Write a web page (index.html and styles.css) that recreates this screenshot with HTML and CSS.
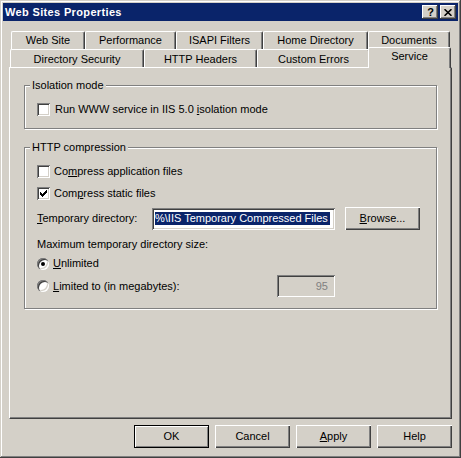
FILE: index.html
```html
<!DOCTYPE html>
<html>
<head>
<meta charset="utf-8">
<title>Web Sites Properties</title>
<link rel="stylesheet" href="styles.css">
</head>
<body>
<div class="window">
  <div class="titlebar">
    <span class="title">Web Sites Properties</span>
    <div class="tbtns">
      <span class="tbtn help">?</span>
      <span class="tbtn close"><svg width="8" height="7" viewBox="0 0 8 7"><path d="M0.5 0.2 L7.5 6.8 M7.5 0.2 L0.5 6.8" stroke="#000" stroke-width="1.6" fill="none"/></svg></span>
    </div>
  </div>
  <div class="content">
    <div class="tabs">
      <div class="tabrow row1">
        <div class="tab w-web">Web Site</div>
        <div class="tab w-perf">Performance</div>
        <div class="tab w-isapi">ISAPI Filters</div>
        <div class="tab w-home">Home Directory</div>
        <div class="tab w-docs">Documents</div>
      </div>
      <div class="tabrow row2">
        <div class="tab w-dirsec">Directory Security</div>
        <div class="tab w-http">HTTP Headers</div>
        <div class="tab w-custom">Custom Errors</div>
        <div class="tab w-service selected">Service</div>
      </div>
    </div>
    <div class="page">
      <fieldset class="group g1">
        <legend>Isolation mode</legend>
        <div class="row cbrow first">
          <span class="cb"></span>
          <span class="lbl">Run WWW service in IIS 5.0 <u>i</u>solation mode</span>
        </div>
      </fieldset>
      <fieldset class="group g2">
        <legend>HTTP compression</legend>
        <div class="row cbrow first">
          <span class="cb"></span>
          <span class="lbl">Co<u>m</u>press application files</span>
        </div>
        <div class="row cbrow second">
          <span class="cb"><svg width="7" height="7" viewBox="0 0 7 7"><g fill="#000"><rect x="0" y="2" width="1" height="3"/><rect x="1" y="3" width="1" height="3"/><rect x="2" y="4" width="1" height="3"/><rect x="3" y="3" width="1" height="3"/><rect x="4" y="2" width="1" height="3"/><rect x="5" y="1" width="1" height="3"/><rect x="6" y="0" width="1" height="3"/></g></svg></span>
          <span class="lbl">Com<u>p</u>ress static files</span>
        </div>
        <div class="row temprow">
          <span class="templbl"><u>T</u>emporary directory:</span>
          <div class="edit tempedit"><span class="sel">%\IIS Temporary Compressed Files</span></div>
          <div class="btn browse"><span><u>B</u>rowse...</span></div>
        </div>
        <div class="row maxrow">Maximum temporary directory size:</div>
        <div class="row radrow unl">
          <span class="radio"><span class="dot"></span></span>
          <span class="rlbl"><u>U</u>nlimited</span>
        </div>
        <div class="row radrow lim">
          <span class="radio"></span>
          <span class="rlbl limlbl"><u>L</u>imited to (in megabytes):</span>
          <div class="edit numedit">95</div>
        </div>
      </fieldset>
    </div>
    <div class="buttons">
      <div class="btn default">OK</div>
      <div class="btn">Cancel</div>
      <div class="btn"><span><u>A</u>pply</span></div>
      <div class="btn">Help</div>
    </div>
  </div>
</div>
</body>
</html>
```
FILE: styles.css
```css
* { box-sizing: border-box; }
html, body { margin: 0; padding: 0; }
body {
  width: 461px;
  height: 458px;
  overflow: hidden;
  background: #D4D0C8;
  font: 11px/13px "Liberation Sans", Arial, sans-serif;
  color: #000;
}
u { text-decoration: underline; text-underline-offset: 1px; }

.window {
  width: 461px;
  height: 458px;
  padding: 3px;
  background: #D4D0C8;
  box-shadow: inset -1px -1px #404040, inset 1px 1px #D4D0C8, inset -2px -2px #808080, inset 2px 2px #FFFFFF;
  display: flex;
  flex-direction: column;
}

.titlebar {
  height: 18px;
  background: #0A246A;
  display: flex;
  align-items: center;
  padding: 0 2px 0 2px;
  flex: none;
}
.title {
  flex: 1;
  color: #fff;
  font-weight: bold;
  font-size: 11px;
  letter-spacing: 0.35px;
}
.tbtns { display: flex; gap: 2px; }
.tbtn {
  width: 16px;
  height: 14px;
  background: #D4D0C8;
  box-shadow: inset -1px -1px #404040, inset 1px 1px #FFFFFF, inset -2px -2px #808080;
  display: flex;
  align-items: center;
  justify-content: center;
}
.tbtn.help { font-weight: bold; font-size: 11px; line-height: 14px; padding-left: 1px; }
.tbtn svg { display: block; }

.content {
  flex: 1;
  padding: 10px 6px 0 6px;
  display: flex;
  flex-direction: column;
}

.tabs { display: flex; flex-direction: column; flex: none; }
.tabrow { display: flex; height: 18px; }
.row1 { padding-left: 2px; }
.row2 { padding-left: 1px; }
.tab {
  height: 18px;
  background: #D4D0C8;
  border-top: 1px solid #fff;
  border-left: 1px solid #fff;
  border-right: 1px solid #404040;
  box-shadow: inset -1px 0 #808080;
  border-radius: 2px 2px 0 0;
  text-align: center;
  line-height: 16px;
  white-space: nowrap;
  flex: none;
}
.row2 .tab { line-height: 18px; }
.w-web { width: 74px; }
.w-perf { width: 91px; }
.w-isapi { width: 87px; }
.w-home { width: 105px; }
.w-docs { width: 82px; }
.w-dirsec { width: 134px; }
.w-http { width: 113px; }
.w-custom { width: 113px; }
.w-service { width: 79px; }
.tab.selected {
  position: relative;
  z-index: 1;
  width: 83px;
  height: 21px;
  margin: -2px -2px 0 -2px;
  line-height: 16px;
  box-shadow: inset -1px 0 #808080;
}

.page {
  height: 352px;
  flex: none;
  border-top: 1px solid #fff;
  border-left: 1px solid #fff;
  border-right: 1px solid #404040;
  border-bottom: 1px solid #404040;
  box-shadow: inset -1px -1px #808080;
  padding: 11px 0 0 14px;
}

.group {
  width: 413px;
  margin: 0;
  padding: 0 12px 0 12px;
  border: 1px solid #808080;
  box-shadow: inset 1px 1px #fff, 1px 1px 0 #fff;
  min-inline-size: 0;
}
.group legend {
  padding: 0 2px;
  margin-left: -7px;
  line-height: 13px;
  background: #D4D0C8;
}
.g1 { padding-bottom: 12px; }
.g2 { margin-top: 12px; padding-bottom: 11px; }

.row { display: flex; align-items: center; }
.cbrow { height: 13px; }
.cbrow.first { margin-top: 11px; }
.cbrow.second { margin-top: 9px; }
.g1 .lbl { margin-left: 5px; }
.g2 .lbl { margin-left: 4px; }
.cb {
  width: 13px;
  height: 13px;
  flex: none;
  background: #fff;
  box-shadow: inset 1px 1px #808080, inset -1px -1px #fff, inset 2px 2px #404040, inset -2px -2px #D4D0C8;
  display: flex;
  align-items: center;
  justify-content: center;
}
.cb svg { display: block; }

.temprow { margin-top: 7px; height: 23px; }
.templbl { width: 115px; flex: none; }
.edit {
  height: 22px;
  background: #fff;
  box-shadow: inset 1px 1px #808080, inset -1px -1px #fff, inset 2px 2px #404040, inset -2px -2px #D4D0C8;
  padding: 0 3px;
  display: flex;
  align-items: center;
  white-space: nowrap;
  overflow: hidden;
  flex: none;
}
.tempedit { width: 183px; }
.sel { background: #0A246A; color: #fff; padding-right: 2px; }
.browse { margin-left: 10px; }

.maxrow { margin-top: 8px; height: 13px; }
.radrow { height: 13px; }
.unl { margin-top: 6px; }
.lim { margin-top: 5px; height: 22px; }
.radio {
  width: 12px;
  height: 12px;
  flex: none;
  border-radius: 50%;
  background: #fff;
  box-shadow: inset 1px 1px #808080, inset 2px 2px #404040, inset -1px -1px #fff, inset -2px -2px #D4D0C8;
  display: flex;
  align-items: center;
  justify-content: center;
}
.dot { width: 4px; height: 4px; border-radius: 50%; background: #000; }
.rlbl { margin-left: 4px; }
.limlbl { width: 224px; flex: none; }
.numedit {
  width: 58px;
  background: #D4D0C8;
  color: #808080;
  justify-content: flex-end;
  padding-right: 7px;
}

.buttons {
  margin-top: 6px;
  display: flex;
  justify-content: flex-end;
  gap: 6px;
}
.btn {
  width: 75px;
  height: 23px;
  flex: none;
  background: #D4D0C8;
  box-shadow: inset 1px 1px #fff, inset -1px -1px #404040, inset -2px -2px #808080;
  display: flex;
  align-items: center;
  justify-content: center;
}
.btn.default {
  border: 1px solid #000;
  box-shadow: inset 1px 1px #fff, inset -1px -1px #808080;
}
```
